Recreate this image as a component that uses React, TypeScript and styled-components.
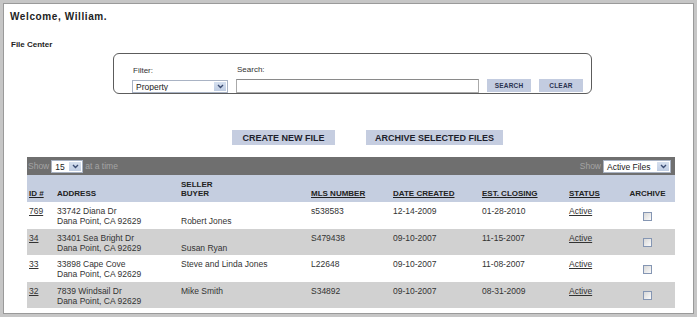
import React from 'react';
import styled, { createGlobalStyle } from 'styled-components';

const Global = createGlobalStyle`
  html, body { margin: 0; padding: 0; background: #fff; }
  body { font-family: "Liberation Sans", Arial, sans-serif; color: #333; }
`;

const Frame = styled.div`
  box-sizing: border-box;
  width: 697px;
  height: 317px;
  border: 3px solid #c6c6c6;
  box-shadow: inset 0 0 0 1px #9a9a9a;
  padding: 8px 0 0 7px;
  display: flex;
  flex-direction: column;
  align-items: flex-start;
`;

const Welcome = styled.h1`
  margin: 0;
  font-size: 10px;
  line-height: 12px;
  font-weight: bold;
  letter-spacing: 0.6px;
  color: #222;
`;

const SectionTitle = styled.h2`
  margin: 17px 0 0 1px;
  font-size: 8px;
  line-height: 10px;
  font-weight: bold;
  color: #222;
`;

const FilterPanel = styled.div`
  box-sizing: border-box;
  margin: 3px 0 0 103px;
  width: 479px;
  height: 41px;
  border: 1px solid #5c5c5c;
  border-radius: 6px;
  padding: 6px 0 0 18px;
  display: flex;
  align-items: flex-end;
  gap: 8px;
`;

const Field = styled.div`
  display: flex;
  flex-direction: column;
  gap: 4px;
`;

const FieldLabel = styled.label`
  font-size: 8px;
  line-height: 10px;
  color: #333;
  padding-left: 1px;
`;

const SelectBox = styled.div<{ $w: number; $h?: number }>`
  box-sizing: border-box;
  width: ${p => p.$w}px;
  height: ${p => p.$h ?? 13}px;
  border: 1px solid #a9b3c4;
  background: #fff;
  display: flex;
  align-items: stretch;
  padding: 1px;
`;

const SelectValue = styled.span`
  flex: 1;
  font-size: 8.5px;
  line-height: 10px;
  color: #222;
  padding-left: 2px;
  white-space: nowrap;
  overflow: hidden;
`;

const SelectArrow = styled.span`
  width: 12px;
  background: linear-gradient(#d6e0ef, #bfcde3);
  display: flex;
  align-items: center;
  justify-content: center;
`;

const TextInput = styled.div<{ $w: number }>`
  box-sizing: border-box;
  width: ${p => p.$w}px;
  height: 14px;
  border: 1px solid #aaa;
  border-top-color: #8a8a8a;
  background: #fff;
`;

const SmallButton = styled.button`
  box-sizing: border-box;
  width: 44px;
  height: 13px;
  margin-bottom: 1px;
  border: none;
  padding: 0;
  background: #c3cce0;
  font-family: "Liberation Sans", Arial, sans-serif;
  font-size: 6.5px;
  font-weight: bold;
  color: #2b3350;
  letter-spacing: 0.2px;
`;

const ActionBar = styled.div`
  margin: 36px 0 0 222px;
  display: flex;
  gap: 31px;
`;

const ActionButton = styled.button<{ $w: number }>`
  box-sizing: border-box;
  width: ${p => p.$w}px;
  height: 15px;
  border: none;
  padding: 0;
  background: #c5cde0;
  font-family: "Liberation Sans", Arial, sans-serif;
  font-size: 9px;
  font-weight: bold;
  color: #1e1e2c;
`;

const Listing = styled.div`
  margin: 12px 0 0 17px;
  width: 648px;
`;

const Toolbar = styled.div`
  box-sizing: border-box;
  height: 18px;
  background: #6f6f6f;
  display: flex;
  align-items: center;
  justify-content: space-between;
  padding: 0 4px 0 1px;
`;

const ToolGroup = styled.div`
  display: flex;
  align-items: center;
  gap: 2px;
`;

const ToolText = styled.span`
  font-size: 8.5px;
  color: #a4a4a4;
`;

const Table = styled.table`
  width: 648px;
  table-layout: fixed;
  border-collapse: collapse;
`;

const Col = styled.col<{ $w: number }>`
  width: ${p => p.$w}px;
`;

const HeadRow = styled.tr`
  background: #c5cee0;
  height: 27px;
`;

const Th = styled.th<{ $center?: boolean }>`
  vertical-align: bottom;
  text-align: ${p => (p.$center ? 'center' : 'left')};
  padding: 0 0 4px ${p => (p.$center ? 0 : 2)}px;
  font-size: 8px;
  line-height: 9px;
  font-weight: bold;
  color: #222;
`;

const SortLink = styled.a`
  color: #222;
  text-decoration: underline;
`;

const Row = styled.tr<{ $alt: boolean }>`
  background: ${p => (p.$alt ? '#d1d1d1' : '#fff')};
`;

const Td = styled.td<{ $center?: boolean }>`
  vertical-align: ${p => (p.$center ? 'middle' : 'top')};
  text-align: ${p => (p.$center ? 'center' : 'left')};
  padding: 4px 0 2.5px ${p => (p.$center ? 0 : 2)}px;
  font-size: 8.5px;
  line-height: 10px;
  color: #333;
  white-space: nowrap;
`;

const Line = styled.div`
  height: 10px;
`;

const CellLink = styled.a`
  color: #333;
  text-decoration: underline;
`;

const Check = styled.input`
  appearance: none;
  box-sizing: border-box;
  width: 9px;
  height: 9px;
  margin: 0;
  display: block;
  margin: 0 auto;
  border: 1px solid #8596b3;
  background: linear-gradient(135deg, #d8d8d8, #fbfbfb);
`;

const Chevron = () => (
  <svg width="7" height="5" viewBox="0 0 7 5">
    <path d="M1 1 L3.5 3.5 L6 1" fill="none" stroke="#3b4c72" strokeWidth="1.4" />
  </svg>
);

const Select = ({ w, value }: { w: number; value: string }) => (
  <SelectBox $w={w}>
    <SelectValue>{value}</SelectValue>
    <SelectArrow>
      <Chevron />
    </SelectArrow>
  </SelectBox>
);

const rows = [
  { id: '769', a1: '33742 Diana Dr', a2: 'Dana Point, CA 92629', seller: '', buyer: 'Robert Jones', mls: 's538583', created: '12-14-2009', closing: '01-28-2010' },
  { id: '34', a1: '33401 Sea Bright Dr', a2: 'Dana Point, CA 92629', seller: '', buyer: 'Susan Ryan', mls: 'S479438', created: '09-10-2007', closing: '11-15-2007' },
  { id: '33', a1: '33898 Cape Cove', a2: 'Dana Point, CA 92629', seller: 'Steve and Linda Jones', buyer: '', mls: 'L22648', created: '09-10-2007', closing: '11-08-2007' },
  { id: '32', a1: '7839 Windsail Dr', a2: 'Dana Point, CA 92629', seller: 'Mike Smith', buyer: '', mls: 'S34892', created: '09-10-2007', closing: '08-31-2009' },
];

export default function App() {
  return (
    <>
      <Global />
      <Frame>
        <Welcome>Welcome, William.</Welcome>
        <SectionTitle>File Center</SectionTitle>
        <FilterPanel>
          <Field>
            <FieldLabel>Filter:</FieldLabel>
            <Select w={96} value="Property" />
          </Field>
          <Field>
            <FieldLabel>Search:</FieldLabel>
            <TextInput $w={243} />
          </Field>
          <SmallButton>SEARCH</SmallButton>
          <SmallButton>CLEAR</SmallButton>
        </FilterPanel>
        <ActionBar>
          <ActionButton $w={103}>CREATE NEW FILE</ActionButton>
          <ActionButton $w={137}>ARCHIVE SELECTED FILES</ActionButton>
        </ActionBar>
        <Listing>
          <Toolbar>
            <ToolGroup>
              <ToolText>Show</ToolText>
              <Select w={32} value="15" />
              <ToolText>at a time</ToolText>
            </ToolGroup>
            <ToolGroup>
              <ToolText>Show</ToolText>
              <Select w={68} value="Active Files" />
            </ToolGroup>
          </Toolbar>
          <Table>
            <colgroup>
              <Col $w={28} />
              <Col $w={124} />
              <Col $w={130} />
              <Col $w={82} />
              <Col $w={89} />
              <Col $w={87} />
              <Col $w={53} />
              <Col $w={55} />
            </colgroup>
            <thead>
              <HeadRow>
                <Th><SortLink>ID #</SortLink></Th>
                <Th>ADDRESS</Th>
                <Th>SELLER<br />BUYER</Th>
                <Th><SortLink>MLS NUMBER</SortLink></Th>
                <Th><SortLink>DATE CREATED</SortLink></Th>
                <Th><SortLink>EST. CLOSING</SortLink></Th>
                <Th><SortLink>STATUS</SortLink></Th>
                <Th $center>ARCHIVE</Th>
              </HeadRow>
            </thead>
            <tbody>
              {rows.map((r, i) => (
                <Row key={r.id} $alt={i % 2 === 1}>
                  <Td><CellLink>{r.id}</CellLink></Td>
                  <Td>
                    <Line>{r.a1}</Line>
                    <Line>{r.a2}</Line>
                  </Td>
                  <Td>
                    <Line>{r.seller}</Line>
                    <Line>{r.buyer}</Line>
                  </Td>
                  <Td>{r.mls}</Td>
                  <Td>{r.created}</Td>
                  <Td>{r.closing}</Td>
                  <Td><CellLink>Active</CellLink></Td>
                  <Td $center><Check type="checkbox" /></Td>
                </Row>
              ))}
            </tbody>
          </Table>
        </Listing>
      </Frame>
    </>
  );
}
